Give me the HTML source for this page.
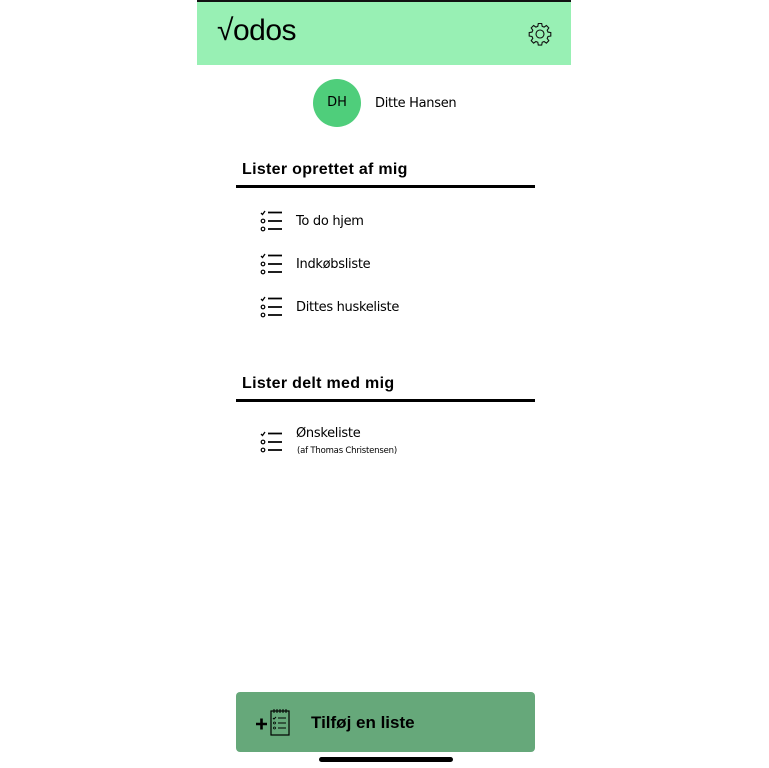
<!DOCTYPE html>
<html><head><meta charset="utf-8"><style>
*{margin:0;padding:0;box-sizing:border-box}
body{width:769px;height:768px;background:#fff;font-family:"DejaVu Sans","Liberation Sans",sans-serif;position:relative;overflow:hidden;color:#000}
.abs{position:absolute}
.hdr{left:197px;top:0;width:374px;height:65px;background:#98f0b4;border-top:2px solid #111}
.t{font-size:13px;letter-spacing:-0.3px}
.h{font-family:"Liberation Sans",sans-serif;font-size:16px;font-weight:bold;letter-spacing:0.3px}
.rule{left:236px;width:299px;height:3px;background:#000}
</style></head><body>
<div class="abs hdr"></div>
<div class="abs" style="left:217px;top:14px;font-family:'Liberation Sans',sans-serif;font-size:30px;letter-spacing:-0.5px">&radic;odos</div>
<svg class="abs" style="left:528px;top:22px" width="24" height="24" viewBox="0 0 24 24" fill="none" stroke="#111" stroke-width="1.1">
<path d="M10.3 1.5h3.4l.5 2.8 1.9.8 2.3-1.6 2.4 2.4-1.6 2.3.8 1.9 2.8.5v3.4l-2.8.5-.8 1.9 1.6 2.3-2.4 2.4-2.3-1.6-1.9.8-.5 2.8h-3.4l-.5-2.8-1.9-.8-2.3 1.6-2.4-2.4 1.6-2.3-.8-1.9-2.8-.5v-3.4l2.8-.5.8-1.9-1.6-2.3 2.4-2.4 2.3 1.6 1.9-.8z"/><circle cx="12" cy="12" r="4"/></svg>
<div class="abs" style="left:313px;top:79px;width:48px;height:48px;border-radius:50%;background:#4fce7b;text-align:center;line-height:48px;font-size:13px">DH</div>
<div class="abs t" style="left:375px;top:96px">Ditte Hansen</div>
<div class="abs h" style="left:242px;top:161px">Lister oprettet af mig</div>
<div class="abs rule" style="top:185px"></div>
<div class="abs h" style="left:242px;top:375px">Lister delt med mig</div>
<div class="abs rule" style="top:399px"></div>
<svg width="0" height="0" style="position:absolute"><defs><g id="li" fill="none" stroke="#000"><path d="M1 3l1.5 1.5L5 1" stroke-width="1.3"/><circle cx="3" cy="11" r="1.8" stroke-width="1.2"/><circle cx="3" cy="19" r="1.8" stroke-width="1.2"/><path d="M8 2.5h14M8 11h14M8 19h14" stroke-width="1.8"/></g></defs></svg>
<svg class="abs" style="left:260px;top:210px" width="24" height="22"><use href="#li"/></svg>
<div class="abs t" style="left:296px;top:214px">To do hjem</div>
<svg class="abs" style="left:260px;top:253px" width="24" height="22"><use href="#li"/></svg>
<div class="abs t" style="left:296px;top:257px">Indkøbsliste</div>
<svg class="abs" style="left:260px;top:296px" width="24" height="22"><use href="#li"/></svg>
<div class="abs t" style="left:296px;top:300px">Dittes huskeliste</div>
<svg class="abs" style="left:260px;top:431px" width="24" height="22"><use href="#li"/></svg>
<div class="abs t" style="left:296px;top:426px">Ønskeliste</div>
<div class="abs" style="left:297px;top:446px;font-size:8.5px;letter-spacing:-0.2px">(af Thomas Christensen)</div>
<div class="abs" style="left:236px;top:692px;width:299px;height:60px;background:#66a87a;border-radius:4px"></div>
<svg class="abs" style="left:254px;top:708px" width="40" height="32" fill="none" stroke="#000"><path d="M2 16h11M7.5 10.5v11" stroke-width="2.6"/><rect x="17" y="3" width="18" height="24" stroke-width="1.2"/><path d="M20 1v4M23 1v4M26 1v4M29 1v4M32 1v4" stroke-width="1"/><path d="M19 10l1 1 2-2M24 10h8M24 15h8M24 20h8" stroke-width="1"/><circle cx="20.5" cy="15" r="1" stroke-width=".8"/><circle cx="20.5" cy="20" r="1" stroke-width=".8"/></svg>
<div class="abs" style="left:311px;top:713px;font-family:'Liberation Sans',sans-serif;font-size:17px;font-weight:bold">Tilføj en liste</div>
<div class="abs" style="left:319px;top:757px;width:134px;height:5px;border-radius:3px;background:#000"></div>
</body></html>
